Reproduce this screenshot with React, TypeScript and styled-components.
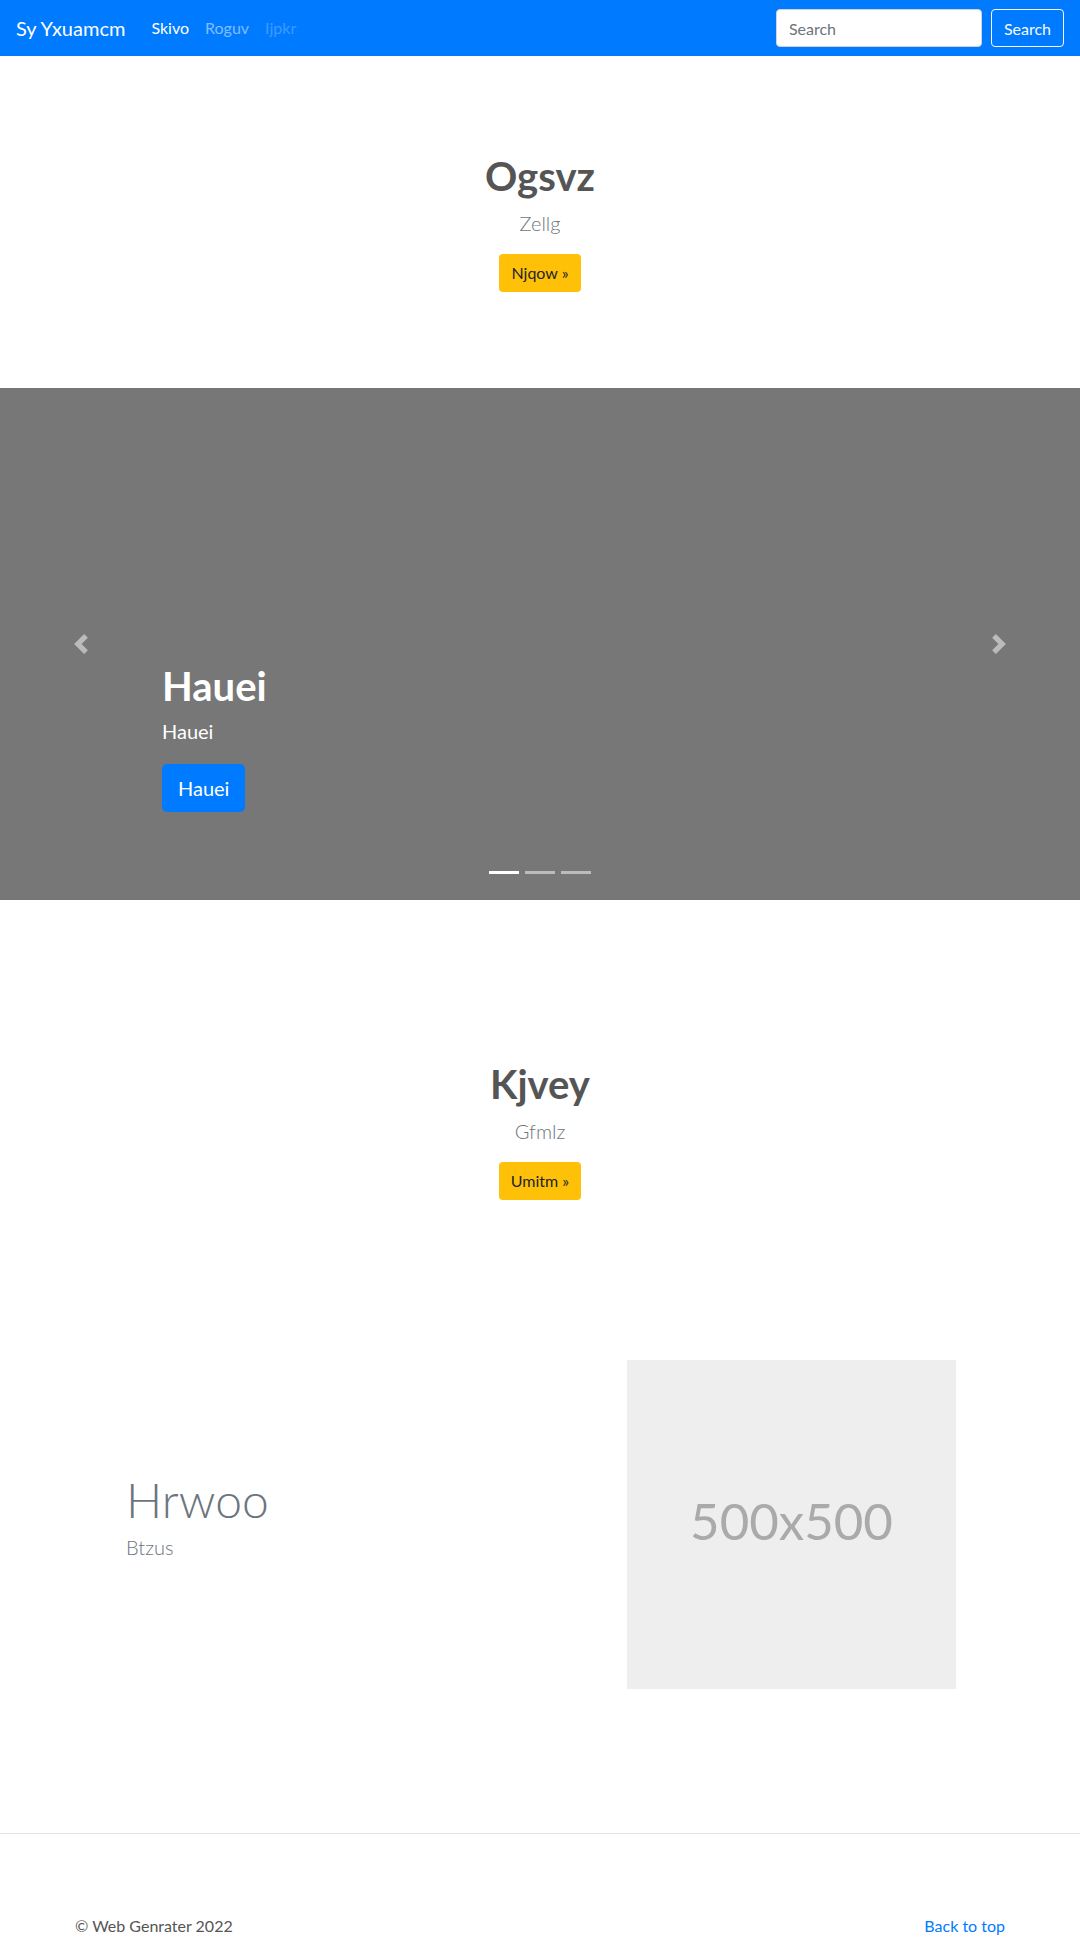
import React from 'react'
import styled, { createGlobalStyle } from 'styled-components'

const GlobalStyle = createGlobalStyle`
  * { box-sizing: border-box; }
  body {
    margin: 0;
    font-family: Lato, "Liberation Sans", sans-serif;
    font-size: 16px;
    line-height: 1.5;
    color: #212529;
    background: #fff;
  }
`

const slides = [true, false, false]

export default function App() {
  return (
    <>
      <GlobalStyle />
      <Navbar>
        <Brand href="#">Sy Yxuamcm</Brand>
        <NavLinks>
          <NavLink state="active" href="#">Skivo</NavLink>
          <NavLink state="normal" href="#">Roguv</NavLink>
          <NavLink state="disabled" href="#">Ijpkr</NavLink>
        </NavLinks>
        <SearchForm onSubmit={e => e.preventDefault()}>
          <SearchInput placeholder="Search" />
          <OutlineButton type="submit">Search</OutlineButton>
        </SearchForm>
      </Navbar>

      <Jumbotron top={96} bottom={96}>
        <HeroTitle>Ogsvz</HeroTitle>
        <Lead>Zellg</Lead>
        <WarningButton href="#">Njqow »</WarningButton>
      </Jumbotron>

      <Carousel>
        <Caption>
          <CaptionTitle>Hauei</CaptionTitle>
          <CaptionText>Hauei</CaptionText>
          <PrimaryButton href="#">Hauei</PrimaryButton>
        </Caption>
        <Control side="left" href="#">
          <svg width="20" height="20" viewBox="0 0 8 8" fill="#fff">
            <path d="M5.25 0l-4 4 4 4 1.5-1.5-2.5-2.5 2.5-2.5-1.5-1.5z" />
          </svg>
        </Control>
        <Control side="right" href="#">
          <svg width="20" height="20" viewBox="0 0 8 8" fill="#fff">
            <path d="M2.75 0l-1.5 1.5 2.5 2.5-2.5 2.5 1.5 1.5 4-4-4-4z" />
          </svg>
        </Control>
        <Indicators>
          {slides.map((active, i) => (
            <Indicator key={i} active={active} />
          ))}
        </Indicators>
      </Carousel>

      <Jumbotron top={160} bottom={96}>
        <HeroTitle>Kjvey</HeroTitle>
        <Lead>Gfmlz</Lead>
        <WarningButton href="#">Umitm »</WarningButton>
      </Jumbotron>

      <Featurette>
        <FeaturetteText>
          <FeaturetteHeading>Hrwoo</FeaturetteHeading>
          <Lead>Btzus</Lead>
        </FeaturetteText>
        <Placeholder>500x500</Placeholder>
      </Featurette>

      <Divider />

      <Footer>
        <span>© Web Genrater 2022</span>
        <FooterLink href="#">Back to top</FooterLink>
      </Footer>
    </>
  )
}

const Navbar = styled.nav`
  display: flex;
  align-items: center;
  height: 56px;
  padding: 0 16px;
  background-color: #007bff;
`

const Brand = styled.a`
  margin-right: 18px;
  font-size: 20px;
  line-height: 30px;
  color: #fff;
  text-decoration: none;
`

const NavLinks = styled.div`
  display: flex;
  flex: 1;
`

const NavLink = styled.a<{ state: 'active' | 'normal' | 'disabled' }>`
  padding: 8px;
  color: ${props =>
    props.state === 'active'
      ? '#fff'
      : props.state === 'normal'
      ? 'rgba(255, 255, 255, 0.5)'
      : 'rgba(255, 255, 255, 0.25)'};
  text-decoration: none;
`

const SearchForm = styled.form`
  display: flex;
  align-items: center;
  gap: 9px;
`

const SearchInput = styled.input`
  width: 206px;
  height: 38px;
  padding: 6px 12px;
  border: 1px solid #ced4da;
  border-radius: 4px;
  font-family: inherit;
  font-size: 16px;
  color: #495057;

  &::placeholder {
    color: #6c757d;
  }
`

const OutlineButton = styled.button`
  height: 38px;
  padding: 6px 12px;
  border: 1px solid #f8f9fa;
  border-radius: 4px;
  background: transparent;
  color: #f8f9fa;
  font-family: inherit;
  font-size: 16px;
`

const Jumbotron = styled.section<{ top: number; bottom: number }>`
  display: flex;
  flex-direction: column;
  align-items: center;
  padding: ${props => `${props.top}px 0 ${props.bottom}px`};
  text-align: center;
`

const HeroTitle = styled.h1`
  margin: 0 0 8px;
  font-size: 40px;
  font-weight: 700;
  line-height: 48px;
  color: #555;
`

const Lead = styled.p`
  margin: 0 0 16px;
  font-size: 20px;
  font-weight: 300;
  line-height: 30px;
  color: #6c757d;
`

const WarningButton = styled.a`
  display: inline-block;
  padding: 6px 12px;
  border-radius: 4px;
  background-color: #ffc107;
  color: #212529;
  font-size: 16px;
  line-height: 26px;
  text-decoration: none;
`

const Carousel = styled.div`
  position: relative;
  display: flex;
  flex-direction: column;
  justify-content: flex-end;
  height: 512px;
  padding: 0 162px 88px;
  background-color: #777;
`

const Caption = styled.div`
  display: flex;
  flex-direction: column;
  align-items: flex-start;
  color: #fff;
`

const CaptionTitle = styled.h1`
  margin: 0 0 6px;
  font-size: 40px;
  font-weight: 700;
  line-height: 48px;
`

const CaptionText = styled.p`
  margin: 0 0 18px;
  font-size: 20px;
  line-height: 30px;
`

const PrimaryButton = styled.a`
  display: inline-block;
  padding: 8px 16px;
  border-radius: 5px;
  background-color: #007bff;
  color: #fff;
  font-size: 20px;
  line-height: 32px;
  text-decoration: none;
`

const Control = styled.a<{ side: 'left' | 'right' }>`
  position: absolute;
  top: 0;
  bottom: 0;
  ${props => props.side}: 0;
  display: flex;
  align-items: center;
  justify-content: center;
  width: 162px;
  opacity: 0.5;
`

const Indicators = styled.div`
  position: absolute;
  left: 0;
  right: 0;
  bottom: 26px;
  display: flex;
  justify-content: center;
  gap: 6px;
`

const Indicator = styled.span<{ active: boolean }>`
  width: 30px;
  height: 3px;
  background-color: #fff;
  opacity: ${props => (props.active ? 1 : 0.5)};
`

const Featurette = styled.section`
  display: flex;
  align-items: center;
  justify-content: space-between;
  padding: 64px 124px 144px 126px;
`

const FeaturetteText = styled.div`
  display: flex;
  flex-direction: column;
`

const FeaturetteHeading = styled.h2`
  margin: 0 0 3px;
  font-size: 48px;
  font-weight: 300;
  line-height: 58px;
  color: #6c757d;
`

const Placeholder = styled.div`
  display: flex;
  align-items: center;
  justify-content: center;
  width: 329px;
  height: 329px;
  padding-bottom: 6px;
  background-color: #eee;
  color: #aaa;
  font-size: 51px;
`

const Divider = styled.hr`
  margin: 0;
  border: 0;
  border-top: 1px solid rgba(0, 0, 0, 0.1);
`

const Footer = styled.footer`
  display: flex;
  justify-content: space-between;
  padding: 80px 75px 32px;
  font-size: 16px;
  line-height: 24px;
  color: #555;
`

const FooterLink = styled.a`
  color: #007bff;
  text-decoration: none;
`
